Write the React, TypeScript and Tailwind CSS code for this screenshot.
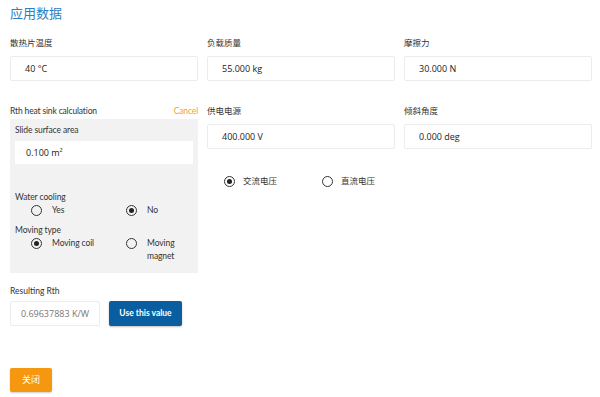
import { useState } from 'react';

const latin = "font-['Lato','Noto_Sans_CJK_SC',sans-serif]";
const value = "font-['Open_Sans','Noto_Sans_CJK_SC',sans-serif]";

function Field({ label, val }: { label: string; val: string }) {
  return (
    <div className="flex flex-col">
      <div className={`h-[24px] flex items-center text-[8.5px] text-[#333] ${latin}`}>{label}</div>
      <div className={`mt-[1px] h-[25px] flex items-center pl-[14px] bg-white border border-[#ececec] rounded-[2px] text-[9px] text-[#222] ${value}`}>
        {val}
      </div>
    </div>
  );
}

function Radio({ checked, onClick }: { checked: boolean; onClick?: () => void }) {
  return (
    <span
      onClick={onClick}
      className="w-[11px] h-[11px] rounded-full border-[1.5px] border-[#333] flex items-center justify-center shrink-0 cursor-pointer"
    >
      {checked && <span className="w-[5px] h-[5px] rounded-full bg-[#222]" />}
    </span>
  );
}

export default function App() {
  const [ac, setAc] = useState(true);
  const [water, setWater] = useState(false);
  const [coil, setCoil] = useState(true);

  return (
    <div className={`w-[600px] h-[397px] bg-white pl-[10px] pr-[8px] ${latin}`}>
      {/* Title */}
      <div className="h-[31px] flex items-start pt-[4px] text-[13px] text-[#2b80c5]">应用数据</div>

      {/* Row 1 */}
      <div className="grid grid-cols-[188px_188px_188px] gap-x-[9px]">
        <Field label="散热片温度" val="40 °C" />
        <Field label="负载质量" val="55.000 kg" />
        <Field label="摩擦力" val="30.000 N" />
      </div>

      {/* Row 2 */}
      <div className="mt-[24px] grid grid-cols-[188px_376px] gap-x-[9px]">
        {/* Left: heat sink calc */}
        <div className="flex flex-col">
          <div className="h-[13px] flex items-center justify-between text-[8.5px] tracking-[-0.15px] text-[#333]">
            <span>Rth heat sink calculation</span>
            <span className="text-[#f5a02c]">Cancel</span>
          </div>
          <div className="mt-[1px] h-[154px] bg-[#f2f2f2] px-[5px] pt-[5px] text-[8.5px] tracking-[-0.1px] text-[#333]">
            <div className="h-[12px] flex items-center">Slide surface area</div>
            <div className={`mt-[5px] h-[23px] bg-white flex items-center pl-[11px] text-[9px] tracking-normal text-[#222] ${value}`}>0.100 m²</div>

            <div className="mt-[27px] h-[12px] flex items-center">Water cooling</div>
            <div className="grid grid-cols-[95px_1fr] pl-[16px]">
              <div className="flex items-center gap-[10px] h-[14px]">
                <Radio checked={water} onClick={() => setWater(true)} />
                <span>Yes</span>
              </div>
              <div className="flex items-center gap-[10px] h-[14px]">
                <Radio checked={!water} onClick={() => setWater(false)} />
                <span>No</span>
              </div>
            </div>

            <div className="mt-[7px] h-[12px] flex items-center">Moving type</div>
            <div className="mt-[1px] grid grid-cols-[95px_1fr] pl-[16px]">
              <div className="flex items-start gap-[10px]">
                <span className="h-[13px] flex items-center"><Radio checked={coil} onClick={() => setCoil(true)} /></span>
                <span className="leading-[13px]">Moving coil</span>
              </div>
              <div className="flex items-start gap-[10px]">
                <span className="h-[13px] flex items-center"><Radio checked={!coil} onClick={() => setCoil(false)} /></span>
                <span className="leading-[13px]">Moving<br />magnet</span>
              </div>
            </div>
          </div>
        </div>

        {/* Right: power + angle */}
        <div className="flex flex-col">
          <div className="grid grid-cols-[188px_188px] gap-x-[9px] -mt-[6px]">
            <Field label="供电电源" val="400.000 V" />
            <Field label="倾斜角度" val="0.000 deg" />
          </div>
          <div className="mt-[25px] flex items-center h-[14px] pl-[17px] text-[8.5px] text-[#333]">
            <div className="flex items-center gap-[8px] w-[98px]">
              <Radio checked={ac} onClick={() => setAc(true)} />
              <span>交流电压</span>
            </div>
            <div className="flex items-center gap-[8px]">
              <Radio checked={!ac} onClick={() => setAc(false)} />
              <span>直流电压</span>
            </div>
          </div>
        </div>
      </div>

      {/* Resulting Rth */}
      <div className="mt-[12px] h-[12px] flex items-center text-[8.5px] text-[#333]">Resulting Rth</div>
      <div className="mt-[4px] flex items-center gap-[9px]">
        <div className={`w-[90px] h-[25px] border border-[#ececec] rounded-[2px] flex items-center justify-center text-[9px] text-[#777] ${value}`}>
          0.69637883 K/W
        </div>
        <button className="w-[73px] h-[25px] bg-[#0a5d9e] rounded-[2px] text-white text-[8.5px] font-bold shadow-[0_1px_2px_rgba(0,0,0,0.25)]">
          Use this value
        </button>
      </div>

      {/* Close */}
      <button className="mt-[42px] w-[42px] h-[24px] bg-[#f5970f] rounded-[2px] text-white text-[9px] shadow-[0_1px_2px_rgba(0,0,0,0.2)]">
        关闭
      </button>
    </div>
  );
}
